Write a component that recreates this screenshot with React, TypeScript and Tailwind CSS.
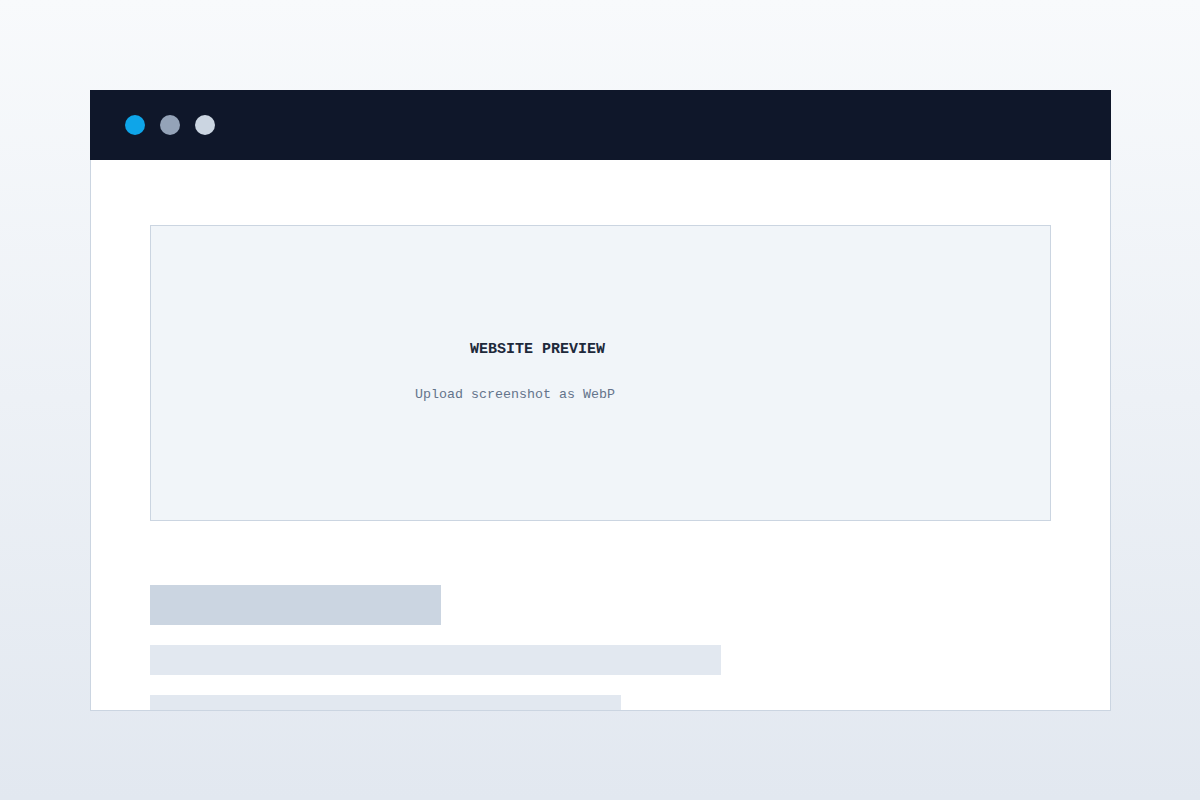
export default function App() {
	return (
		<div className="w-[1200px] h-[800px] bg-gradient-to-b from-[#f8fafc] to-[#e2e8f0] pt-[90px] pl-[90px] overflow-hidden">
			<div className="w-[1021px] h-[621px] flex flex-col overflow-hidden">
				<div className="h-[70px] bg-[#0f172a] flex items-center gap-[15px] pl-[35px] shrink-0">
					<span className="w-5 h-5 rounded-full bg-[#0ea5e9]" />
					<span className="w-5 h-5 rounded-full bg-[#94a3b8]" />
					<span className="w-5 h-5 rounded-full bg-[#cbd5e1]" />
				</div>
				<div className="flex-1 bg-white border border-t-0 border-[#cbd5e1] px-[59px] pt-[65px] overflow-hidden">
					<div className="h-[296px] bg-[#f1f5f9] border border-[#cbd5e1] flex flex-col items-start font-['Liberation_Mono',monospace] pt-[114px]">
						<div className="ml-[319px] text-[15px] leading-5 font-bold text-[#1e293b]">
							WEBSITE PREVIEW
						</div>
						<div className="ml-[264px] mt-[25px] text-[13.33px] leading-5 text-[#64748b]">
							Upload screenshot as WebP
						</div>
					</div>
					<div className="mt-[64px] flex flex-col gap-5">
						<div className="w-[291px] h-10 bg-[#cbd5e1]" />
						<div className="w-[571px] h-[30px] bg-[#e2e8f0]" />
						<div className="w-[471px] h-[30px] bg-[#e2e8f0]" />
					</div>
				</div>
			</div>
		</div>
	);
}
